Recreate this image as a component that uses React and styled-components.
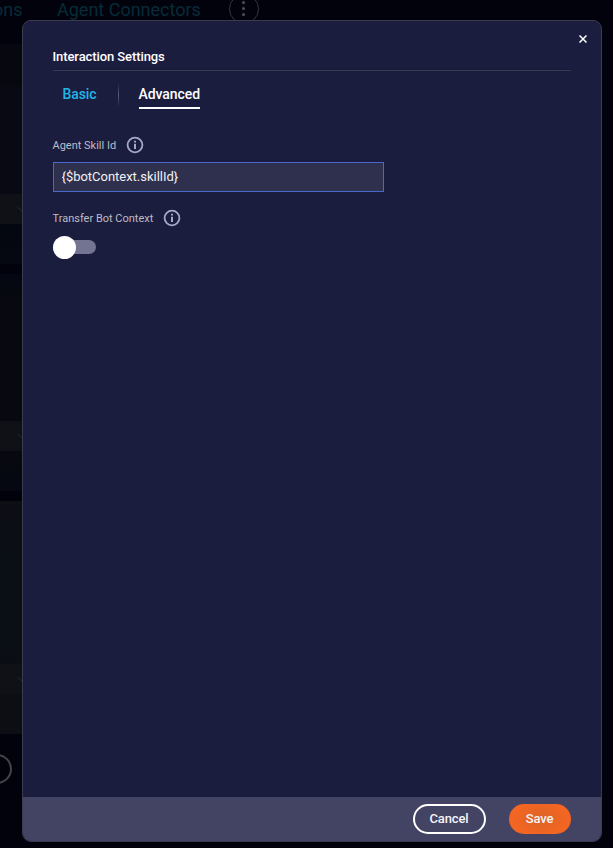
import React, { useState } from "react";
import styled, { createGlobalStyle } from "styled-components";

const GlobalStyle = createGlobalStyle`
  * { box-sizing: border-box; }
  body {
    margin: 0;
    background: #02020d;
    font-family: Roboto, "Liberation Sans", sans-serif;
  }
  button { font-family: inherit; }
`;

const Page = styled.div`
  position: relative;
  height: 848px;
  overflow: hidden;
`;

const Backdrop = styled.div`
  display: flex;
  flex-direction: column;
  height: 100%;
`;

const TopNav = styled.div`
  display: flex;
  align-items: flex-start;
  height: 44px;
  color: #062c38;
  font-size: 18px;
  line-height: 20px;
  white-space: nowrap;
`;

const NavClip = styled.span`
  display: flex;
  justify-content: flex-end;
  width: 22.5px;
  margin-right: 34.5px;
`;

const NavLabel = styled.span`
  width: 144px;
  margin-right: 28px;
`;

const MoreButton = styled.span`
  display: flex;
  flex-direction: column;
  align-items: center;
  justify-content: center;
  gap: 3px;
  width: 30px;
  height: 30px;
  margin-top: -6px;
  padding: 0 1px 1px 0;
  border: 1px solid #36363b;
  border-radius: 50%;
`;

const Dot = styled.i`
  width: 3px;
  height: 3px;
  border-radius: 50%;
  background: #505052;
`;

const Panel = styled.div`
  width: 22px;
  height: ${(p) => p.$height}px;
  margin-bottom: 10px;
  padding-top: ${(p) => p.$offset}px;
  background: ${(p) => p.$fill};
`;

const SelectRow = styled.div`
  display: flex;
  align-items: center;
  justify-content: flex-end;
  height: 30px;
  overflow: hidden;
  background: #101117;
`;

const AddCircle = styled.div`
  width: 30px;
  height: 30px;
  margin: 10px 0 0 -18px;
  border: 2px solid #454547;
  border-radius: 50%;
`;

const Dialog = styled.section`
  position: absolute;
  top: 20px;
  left: 22px;
  display: flex;
  flex-direction: column;
  width: 580px;
  height: 822px;
  overflow: hidden;
  border: 1px solid #3b3b50;
  border-radius: 9px;
  background: #1b1d3f;
`;

const CloseButton = styled.button`
  display: flex;
  align-self: flex-end;
  margin: 14px 14px 0 0;
  padding: 0;
  border: 0;
  background: none;
`;

const Body = styled.div`
  flex: 1;
  padding: 6px 30px 0 29.5px;
`;

const Title = styled.h1`
  height: 22px;
  margin: 0;
  border-bottom: 1px solid #393a52;
  color: #fff;
  font-size: 13px;
  font-weight: 500;
  line-height: 15px;
  letter-spacing: -0.09px;
`;

const Tabs = styled.nav`
  display: flex;
  align-items: flex-start;
  height: 38px;
  padding: 13px 0 0 10px;
`;

const Tab = styled.button`
  height: 25px;
  padding: 0 0 4px;
  border: 0;
  border-bottom: 2px solid ${(p) => (p.$active ? "#fff" : "transparent")};
  background: none;
  color: ${(p) => (p.$active ? "#fff" : "#22b6e6")};
  font-size: 14px;
  font-weight: 500;
  line-height: 16px;
  letter-spacing: -0.08px;
`;

const TabDivider = styled.span`
  width: 1px;
  height: 24px;
  margin: -1px 20px 0 21px;
  background: linear-gradient(transparent, #5c5d76, transparent);
`;

const FieldLabel = styled.div`
  display: flex;
  align-items: center;
  gap: 10px;
  height: 18px;
  margin-top: ${(p) => p.$top}px;
  color: #bbbcc6;
  font-size: 11px;
`;

const TextInput = styled.input`
  display: block;
  width: 331px;
  height: 30px;
  margin-top: 8px;
  padding: 0 8px 1px;
  border: 1px solid #4769cc;
  border-radius: 0;
  outline: 0;
  background: #2e304d;
  color: #f1f1f5;
  font: 13px Roboto, sans-serif;
  letter-spacing: -0.02px;
`;

const Switch = styled.button`
  display: flex;
  align-items: center;
  width: 43px;
  height: 23px;
  margin-top: 9px;
  padding: 0 0 1px;
  border: 0;
  background: none;
`;

const Track = styled.span`
  display: flex;
  align-items: center;
  width: 43px;
  height: 14px;
  border-radius: 7px;
  background: #727492;
`;

const Knob = styled.span`
  flex: none;
  width: 23px;
  height: 23px;
  border-radius: 50%;
  background: #fff;
`;

const Footer = styled.footer`
  display: flex;
  align-items: flex-start;
  justify-content: flex-end;
  gap: 23px;
  height: 44px;
  padding: 7px 30px 0 0;
  background: #434463;
`;

const ActionButton = styled.button`
  width: ${(p) => (p.$primary ? 62 : 73)}px;
  height: 30px;
  padding: 0 1px 2px 0;
  border: ${(p) => (p.$primary ? "0" : "2px solid #fff")};
  border-radius: 15px;
  background: ${(p) =>
    p.$primary
      ? "radial-gradient(ellipse 25px 15px at center, #d96527, #f26522)"
      : "transparent"};
  color: #f5f4f7;
  font-size: 13px;
  font-weight: 500;
  line-height: 15px;
  letter-spacing: -0.1px;
`;

function Chevron() {
  return (
    <svg width="5" height="8" viewBox="0 0 5 8">
      <path d="M.5 2 5 6" fill="none" stroke="#29292d" />
    </svg>
  );
}

function InfoIcon() {
  return (
    <svg width="18" height="18" viewBox="0 0 18 18">
      <circle cx="9" cy="9" r="7.4" fill="none" stroke="#a5a8c8" strokeWidth="1.8" />
      <path d="M9 7.7v5.3M9 4.7v1.8" stroke="#a5a8c8" strokeWidth="2" />
    </svg>
  );
}

export default function App() {
  const [tab, setTab] = useState("Advanced");
  const [skill, setSkill] = useState("{$botContext.skillId}");

  return (
    <>
      <GlobalStyle />
      <Page>
        <Backdrop>
          <TopNav>
            <NavClip>ons</NavClip>
            <NavLabel>Agent Connectors</NavLabel>
            <MoreButton><Dot /><Dot /><Dot /></MoreButton>
          </TopNav>
          <Panel $height={220} $offset={150} $fill="linear-gradient(#06070f 0 40px, #080912 44px 150px, #030710 180px, #060811)">
            <SelectRow><Chevron /></SelectRow>
          </Panel>
          <Panel $height={217} $offset={147} $fill="linear-gradient(#030711, #080910 28px 177px, #050811)">
            <SelectRow><Chevron /></SelectRow>
          </Panel>
          <Panel $height={233} $offset={163} $fill="linear-gradient(#0e0e15, #0a0e15 60px 140px, #0d0e14)">
            <SelectRow><Chevron /></SelectRow>
          </Panel>
          <AddCircle />
        </Backdrop>

        <Dialog role="dialog" aria-label="Interaction Settings">
          <CloseButton aria-label="Close">
            <svg width="8" height="8" viewBox="0 0 8 8">
              <path d="M.5.5 7.5 7.5M7.5.5.5 7.5" stroke="#fff" strokeWidth="1.5" />
            </svg>
          </CloseButton>
          <Body>
            <Title>Interaction Settings</Title>
            <Tabs>
              <Tab $active={tab === "Basic"} onClick={() => setTab("Basic")}>Basic</Tab>
              <TabDivider />
              <Tab $active={tab === "Advanced"} onClick={() => setTab("Advanced")}>Advanced</Tab>
            </Tabs>
            <FieldLabel $top={27}>Agent Skill Id <InfoIcon /></FieldLabel>
            <TextInput aria-label="Agent Skill Id" value={skill} onChange={(e) => setSkill(e.target.value)} />
            <FieldLabel $top={17}>Transfer Bot Context <InfoIcon /></FieldLabel>
            <Switch role="switch" aria-checked="false" aria-label="Transfer Bot Context">
              <Track><Knob /></Track>
            </Switch>
          </Body>
          <Footer>
            <ActionButton>Cancel</ActionButton>
            <ActionButton $primary>Save</ActionButton>
          </Footer>
        </Dialog>
      </Page>
    </>
  );
}
